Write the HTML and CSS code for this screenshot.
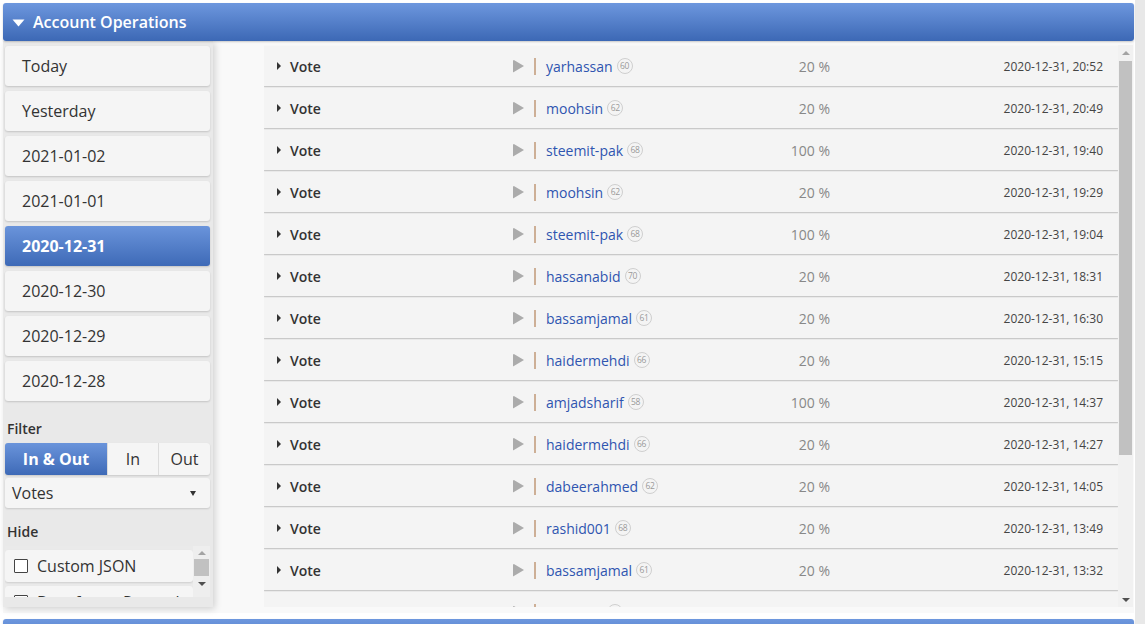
FILE: index.html
```html
<!DOCTYPE html>
<html>
<head>
<meta charset="utf-8">
<link rel="stylesheet" href="styles.css">
</head>
<body>
<div class="page">
  <div class="app">
    <section class="panel">
      <div class="panel-head">
        <svg class="caret" width="13" height="8" viewBox="0 0 13 8"><path d="M0.5 0.5 H12.5 L6.5 7.5 Z" fill="#fff"/></svg>
        <span>Account Operations</span>
      </div>
      <div class="panel-body">
        <aside class="sidebar">
          <div class="day">Today</div>
          <div class="day">Yesterday</div>
          <div class="day">2021-01-02</div>
          <div class="day">2021-01-01</div>
          <div class="day active">2020-12-31</div>
          <div class="day">2020-12-30</div>
          <div class="day">2020-12-29</div>
          <div class="day">2020-12-28</div>
          <div class="label">Filter</div>
          <div class="seg">
            <div class="seg-item seg-all active">In &amp; Out</div>
            <div class="seg-item seg-in">In</div>
            <div class="seg-item seg-out">Out</div>
          </div>
          <div class="select"><span>Votes</span><span class="sel-arrow"></span></div>
          <div class="label hide-label">Hide</div>
          <div class="hidebox">
            <div class="hide-list">
              <div class="hide-item"><span class="cb"></span>Custom JSON</div>
              <div class="hide-item"><span class="cb"></span>Benefactor Reward</div>
            </div>
            <div class="mini-scroll">
              <div class="ms-up"></div>
              <div class="ms-thumb"></div>
              <div class="ms-down"></div>
            </div>
          </div>
        </aside>
        <main class="main">
          <div class="ops">
            <div class="ops-list">
              <div class="row"><span class="exp"></span><span class="type">Vote</span><span class="who"><span class="play"></span><span class="sep"></span><a class="user">yarhassan</a><span class="rep">60</span></span><span class="pct">20 %</span><span class="date">2020-12-31, 20:52</span></div>
              <div class="row"><span class="exp"></span><span class="type">Vote</span><span class="who"><span class="play"></span><span class="sep"></span><a class="user">moohsin</a><span class="rep">62</span></span><span class="pct">20 %</span><span class="date">2020-12-31, 20:49</span></div>
              <div class="row"><span class="exp"></span><span class="type">Vote</span><span class="who"><span class="play"></span><span class="sep"></span><a class="user">steemit-pak</a><span class="rep">68</span></span><span class="pct">100 %</span><span class="date">2020-12-31, 19:40</span></div>
              <div class="row"><span class="exp"></span><span class="type">Vote</span><span class="who"><span class="play"></span><span class="sep"></span><a class="user">moohsin</a><span class="rep">62</span></span><span class="pct">20 %</span><span class="date">2020-12-31, 19:29</span></div>
              <div class="row"><span class="exp"></span><span class="type">Vote</span><span class="who"><span class="play"></span><span class="sep"></span><a class="user">steemit-pak</a><span class="rep">68</span></span><span class="pct">100 %</span><span class="date">2020-12-31, 19:04</span></div>
              <div class="row"><span class="exp"></span><span class="type">Vote</span><span class="who"><span class="play"></span><span class="sep"></span><a class="user">hassanabid</a><span class="rep">70</span></span><span class="pct">20 %</span><span class="date">2020-12-31, 18:31</span></div>
              <div class="row"><span class="exp"></span><span class="type">Vote</span><span class="who"><span class="play"></span><span class="sep"></span><a class="user">bassamjamal</a><span class="rep">61</span></span><span class="pct">20 %</span><span class="date">2020-12-31, 16:30</span></div>
              <div class="row"><span class="exp"></span><span class="type">Vote</span><span class="who"><span class="play"></span><span class="sep"></span><a class="user">haidermehdi</a><span class="rep">66</span></span><span class="pct">20 %</span><span class="date">2020-12-31, 15:15</span></div>
              <div class="row"><span class="exp"></span><span class="type">Vote</span><span class="who"><span class="play"></span><span class="sep"></span><a class="user">amjadsharif</a><span class="rep">58</span></span><span class="pct">100 %</span><span class="date">2020-12-31, 14:37</span></div>
              <div class="row"><span class="exp"></span><span class="type">Vote</span><span class="who"><span class="play"></span><span class="sep"></span><a class="user">haidermehdi</a><span class="rep">66</span></span><span class="pct">20 %</span><span class="date">2020-12-31, 14:27</span></div>
              <div class="row"><span class="exp"></span><span class="type">Vote</span><span class="who"><span class="play"></span><span class="sep"></span><a class="user">dabeerahmed</a><span class="rep">62</span></span><span class="pct">20 %</span><span class="date">2020-12-31, 14:05</span></div>
              <div class="row"><span class="exp"></span><span class="type">Vote</span><span class="who"><span class="play"></span><span class="sep"></span><a class="user">rashid001</a><span class="rep">68</span></span><span class="pct">20 %</span><span class="date">2020-12-31, 13:49</span></div>
              <div class="row"><span class="exp"></span><span class="type">Vote</span><span class="who"><span class="play"></span><span class="sep"></span><a class="user">bassamjamal</a><span class="rep">61</span></span><span class="pct">20 %</span><span class="date">2020-12-31, 13:32</span></div>
              <div class="row"><span class="exp"></span><span class="type">Vote</span><span class="who"><span class="play"></span><span class="sep"></span><a class="user">moohsin</a><span class="rep">62</span></span><span class="pct">20 %</span><span class="date">2020-12-31, 13:10</span></div>
            </div>
            <div class="vscroll">
              <div class="vs-up"></div>
              <div class="vs-thumb"></div>
              <div class="vs-space"></div>
              <div class="vs-down"></div>
            </div>
          </div>
        </main>
      </div>
    </section>
    <div class="panel-head next"></div>
  </div>
  <div class="pagebar"></div>
</div>
</body>
</html>
```

FILE: styles.css
```css
* { box-sizing: border-box; }

html, body {
  margin: 0;
  height: 624px;
  overflow: hidden;
  background: #ffffff;
  font-family: "Open Sans", "Liberation Sans", sans-serif;
  color: #333;
}

.page {
  display: flex;
  height: 624px;
}

.app {
  flex: 1;
  min-width: 0;
  padding: 3px 1px 0 3px;
}

.pagebar {
  width: 10px;
  background: #e8e8e8;
}

.panel-head {
  height: 38px;
  border-radius: 3px;
  background: linear-gradient(#6d97de, #3c68b5);
  display: flex;
  align-items: center;
  padding-left: 9px;
  color: #fff;
  font-weight: 600;
  font-size: 16px;
  box-shadow: 0 1px 2px rgba(0, 0, 0, 0.2);
  position: relative;
  z-index: 2;
}

.caret {
  flex: none;
  margin-right: 8px;
  margin-top: 1px;
}

.panel-head.next {
  margin-top: 6px;
}

.panel-body {
  display: flex;
  height: 572px;
  background: #f9f9f9;
}

/* Sidebar */
.sidebar {
  width: 210px;
  flex: none;
  align-self: flex-start;
  background: #e9e9e9;
  padding: 5px 3px 10px 2px;
  box-shadow: 2px 2px 7px rgba(0, 0, 0, 0.16);
  position: relative;
  z-index: 1;
}

.day {
  height: 40px;
  margin-bottom: 5px;
  background: #f5f5f5;
  border-radius: 3px;
  box-shadow: 0 1px 2px rgba(0, 0, 0, 0.16);
  display: flex;
  align-items: center;
  padding-left: 17px;
  font-size: 16px;
  color: #333;
}

.day.active {
  background: linear-gradient(#6a94db, #3e6ab7);
  color: #fff;
  font-weight: 700;
}

.label {
  font-size: 14px;
  font-weight: 600;
  color: #333;
  line-height: 20px;
  padding: 13px 0 0 2px;
  margin-bottom: 4px;
}

.hide-label {
  padding-top: 14px;
}

.seg {
  display: flex;
  height: 32px;
  border-radius: 3px;
  overflow: hidden;
  margin-bottom: 3px;
  box-shadow: 0 1px 2px rgba(0, 0, 0, 0.14);
  background: #dcdcdc;
  gap: 1px;
}

.seg-item {
  display: flex;
  align-items: center;
  justify-content: center;
  background: #f5f5f5;
  font-size: 16px;
  color: #333;
}

.seg-all { width: 102px; }
.seg-in { width: 50px; }
.seg-out { width: 51px; }

.seg-item.active {
  background: linear-gradient(#6a94db, #3e6ab7);
  color: #fff;
  font-weight: 700;
}

.select {
  height: 30px;
  background: #f5f5f5;
  border-radius: 3px;
  box-shadow: 0 1px 2px rgba(0, 0, 0, 0.14);
  display: flex;
  align-items: center;
  justify-content: space-between;
  padding: 0 14px 0 7px;
  font-size: 16px;
  color: #333;
}

.sel-arrow {
  width: 0;
  height: 0;
  border-left: 3px solid transparent;
  border-right: 3px solid transparent;
  border-top: 5px solid #333;
  margin-top: 1px;
}

.hidebox {
  height: 51px;
  display: flex;
  overflow: hidden;
  background: #eaeaea;
}

.hide-list {
  flex: 1;
  padding-top: 4px;
}

.hide-item {
  height: 32px;
  margin-bottom: 4px;
  background: #f5f5f5;
  border-radius: 3px;
  box-shadow: 0 1px 2px rgba(0, 0, 0, 0.12);
  display: flex;
  align-items: center;
  padding-left: 9px;
  font-size: 16px;
  color: #333;
}

.cb {
  width: 14px;
  height: 14px;
  border: 1.5px solid #444;
  border-radius: 1px;
  margin-right: 9px;
  background: #fff;
}

.mini-scroll {
  width: 17px;
  background: #eeeeee;
  display: flex;
  flex-direction: column;
  align-items: center;
  padding: 5px 1px 0;
}

.ms-up, .vs-up {
  width: 0;
  height: 0;
  border-left: 4px solid transparent;
  border-right: 4px solid transparent;
  border-bottom: 4px solid #a3a3a3;
}

.ms-thumb {
  width: 15px;
  height: 17px;
  background: #c1c1c1;
  margin-top: 4px;
}

.ms-down, .vs-down {
  width: 0;
  height: 0;
  border-left: 4px solid transparent;
  border-right: 4px solid transparent;
  border-top: 4px solid #505050;
  margin-top: 6px;
}

/* Main operations list */
.main {
  flex: 1;
  min-width: 0;
  padding: 4px 1px 0 51px;
}

.ops {
  display: flex;
  height: 562px;
  background: #f7f7f7;
}

.ops-list {
  flex: 1;
  min-width: 0;
  overflow: hidden;
  padding-top: 1px;
}

.row {
  height: 40px;
  margin-bottom: 2px;
  background: #f4f4f4;
  box-shadow: 0 1px 1px rgba(0, 0, 0, 0.14), 0 2px 2px rgba(0, 0, 0, 0.05);
  display: flex;
  align-items: center;
  padding: 0 15px 0 13px;
  font-size: 14px;
  white-space: nowrap;
}

.exp {
  width: 13px;
  height: 8px;
  flex: none;
  position: relative;
}

.exp::before {
  content: "";
  position: absolute;
  left: 0;
  top: 0;
  border-top: 4px solid transparent;
  border-bottom: 4px solid transparent;
  border-left: 4px solid #333;
}

.type {
  width: 223px;
  flex: none;
  font-weight: 600;
  font-size: 14px;
  color: #333;
}

.who {
  width: 247px;
  flex: none;
  display: flex;
  align-items: center;
}

.play {
  width: 11px;
  height: 13px;
  margin-right: 10px;
  background: #ababab;
  clip-path: polygon(0 0, 100% 50%, 0 100%);
  border-radius: 1px;
}

.sep {
  width: 2px;
  height: 17px;
  background: #cdaf96;
  margin-right: 10px;
}

.user {
  color: #2f55b0;
  text-decoration: none;
}

.rep {
  width: 16px;
  height: 16px;
  margin-left: 4px;
  border: 1px solid #cfcfcf;
  border-radius: 50%;
  font-size: 8.5px;
  line-height: 14px;
  text-align: center;
  color: #999;
  letter-spacing: -0.3px;
}

.pct {
  width: 70px;
  flex: none;
  text-align: right;
  color: #888;
}

.date {
  flex: 1;
  text-align: right;
  font-size: 12px;
  color: #444;
}

.vscroll {
  width: 15px;
  flex: none;
  background: #f1f1f1;
  display: flex;
  flex-direction: column;
  align-items: center;
  padding: 6px 1px 5px;
}

.vs-thumb {
  width: 13px;
  height: 394px;
  background: #c1c1c1;
  margin-top: 6px;
}

.vs-space {
  flex: 1;
}

.vs-down {
  margin-top: 0;
}
```
